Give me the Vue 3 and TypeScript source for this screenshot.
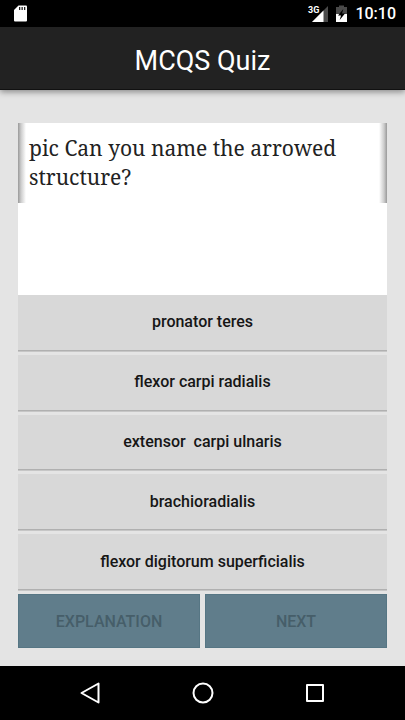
<script setup lang="ts">
import { ref } from 'vue'

interface Option {
  id: number
  label: string
}

const clock = '10:10'
const title = 'MCQS Quiz'
const question = 'pic Can you name the arrowed structure?'
const options: Option[] = [
  { id: 1, label: 'pronator teres' },
  { id: 2, label: 'flexor carpi radialis' },
  { id: 3, label: 'extensor  carpi ulnaris' },
  { id: 4, label: 'brachioradialis' },
  { id: 5, label: 'flexor digitorum superficialis' },
]
const selected = ref<number | null>(null)
</script>

<template>
  <div class="screen">
    <div class="status">
      <svg class="sd" viewBox="0 0 13 17" width="13" height="17" aria-hidden="true">
        <path d="M4.500 0.500H12Q13 0.500 13 1.500V15.500Q13 16.500 12 16.500H1Q0 16.500 0 15.500V5Z" fill="#fff" />
        <path d="M5 2h1.300v3H5zM7.500 2h1.300v3H7.500zM10 2h1.300v3H10z" fill="#222" />
      </svg>
      <div class="status-right">
        <span class="signal">
          <span class="network">3G</span>
          <svg viewBox="0 0 16 16" width="16" height="16" aria-hidden="true">
            <path d="M16 0V16H0Z" fill="#4a4a4a" />
            <path d="M11.500 4.500V16H0Z" fill="#fff" />
          </svg>
        </span>
        <svg viewBox="0 0 11 17" width="11" height="17" aria-hidden="true">
          <path d="M3 0.500h5v1.500h3v7H0V2h3z" fill="#4a4a4a" />
          <path d="M0 9h11v8H0z" fill="#fff" />
          <path d="M7.300 4L2 10.500H5L3.700 15L9 8.500H6Z" fill="#000" />
        </svg>
        <time class="clock">{{ clock }}</time>
      </div>
    </div>

    <header class="bar">
      <h1>{{ title }}</h1>
    </header>

    <main class="quiz">
      <p class="question">{{ question }}</p>
      <div class="figure"></div>
      <div class="options">
        <button
          v-for="option in options"
          :key="option.id"
          type="button"
          class="option"
          :aria-pressed="selected === option.id"
          @click="selected = option.id"
        >{{ option.label }}</button>
      </div>
      <div class="actions">
        <button type="button" disabled>EXPLANATION</button>
        <button type="button" disabled>NEXT</button>
      </div>
    </main>

    <nav class="nav">
      <button type="button" aria-label="Back">
        <svg viewBox="0 0 22 22" width="22" height="22">
          <path d="M18.500 1.500V20.500L1.500 11Z" fill="none" stroke="#fff" stroke-width="2" stroke-linejoin="round" />
        </svg>
      </button>
      <button type="button" aria-label="Home">
        <svg viewBox="0 0 22 22" width="22" height="22">
          <circle cx="11" cy="11" r="9.500" fill="none" stroke="#fff" stroke-width="2" />
        </svg>
      </button>
      <button type="button" aria-label="Recent apps">
        <svg viewBox="0 0 22 22" width="22" height="22">
          <rect x="3" y="3" width="16" height="16" fill="none" stroke="#fff" stroke-width="2" stroke-linejoin="round" />
        </svg>
      </button>
    </nav>
  </div>
</template>

<style>
body {
  background: #e4e4e4;
}
</style>

<style scoped>
.screen {
  display: flex;
  flex-direction: column;
  min-height: 100vh;
  background: #e4e4e4;
  font-family: Roboto, 'Liberation Sans', sans-serif;
}
.status {
  display: flex;
  align-items: center;
  justify-content: space-between;
  height: 27px;
  padding: 0 9px 0 14px;
  background: #000;
  color: #fff;
}
.status-right {
  display: flex;
  align-items: center;
  gap: 8px;
}
.signal {
  display: flex;
  align-items: flex-end;
  position: relative;
}
.network {
  position: absolute;
  right: 9px;
  top: 0;
  font-size: 9px;
  line-height: 8px;
  font-weight: 700;
}
.clock {
  font-size: 16px;
  line-height: 30px;
  font-weight: 500;
}
.bar {
  box-sizing: border-box;
  height: 63px;
  background: #222;
  border-bottom: 1px solid #111;
  box-shadow: 0 2px 6px rgba(0, 0, 0, 0.4);
}
h1 {
  margin: 0;
  text-align: center;
  color: #fff;
  font-size: 27px;
  line-height: 68px;
  font-weight: 400;
}
.quiz {
  flex: 1;
  display: flex;
  flex-direction: column;
  padding: 33px 18px 18px;
}
.question {
  box-sizing: border-box;
  min-height: 80px;
  margin: 0;
  padding: 11px 11px 10px;
  background:
    linear-gradient(to right, #999, #ccc 3px, #fff 8px) left / 8px 100% no-repeat,
    linear-gradient(to left, #999, #ccc 3px, #fff 8px) right / 8px 100% no-repeat,
    #fff;
  color: #222;
  font-family: 'Noto Serif', 'Droid Serif', 'DejaVu Serif', serif;
  font-size: 21px;
  line-height: 29px;
}
.figure {
  height: 92px;
  background: #fff;
}
.options {
  flex: 1;
  display: grid;
  grid-auto-rows: 1fr;
  gap: 5px;
  padding-bottom: 5px;
}
.option {
  min-height: 48px;
  margin: 0;
  padding: 0 12px;
  border: 0;
  background: #d8d8d8;
  box-shadow: 0 1px 0 #b0b0b0, 0 2px 0 #c6c6c6;
  color: #161616;
  font: 500 16px/24px Roboto, 'Liberation Sans', sans-serif;
  white-space: pre-wrap;
}
.actions {
  display: grid;
  grid-template-columns: 1fr 1fr;
  gap: 5px;
}
.actions button {
  height: 54px;
  padding: 1px 0 0;
  border: 1px solid #567684;
  background: #607d8b;
  color: #465e69;
  font: 500 16px/24px Roboto, 'Liberation Sans', sans-serif;
}
.nav {
  display: flex;
  align-items: center;
  justify-content: center;
  gap: 68px;
  height: 54px;
  background: #000;
}
.nav button {
  display: flex;
  justify-content: center;
  width: 44px;
  padding: 0;
  border: 0;
  background: none;
}
</style>
